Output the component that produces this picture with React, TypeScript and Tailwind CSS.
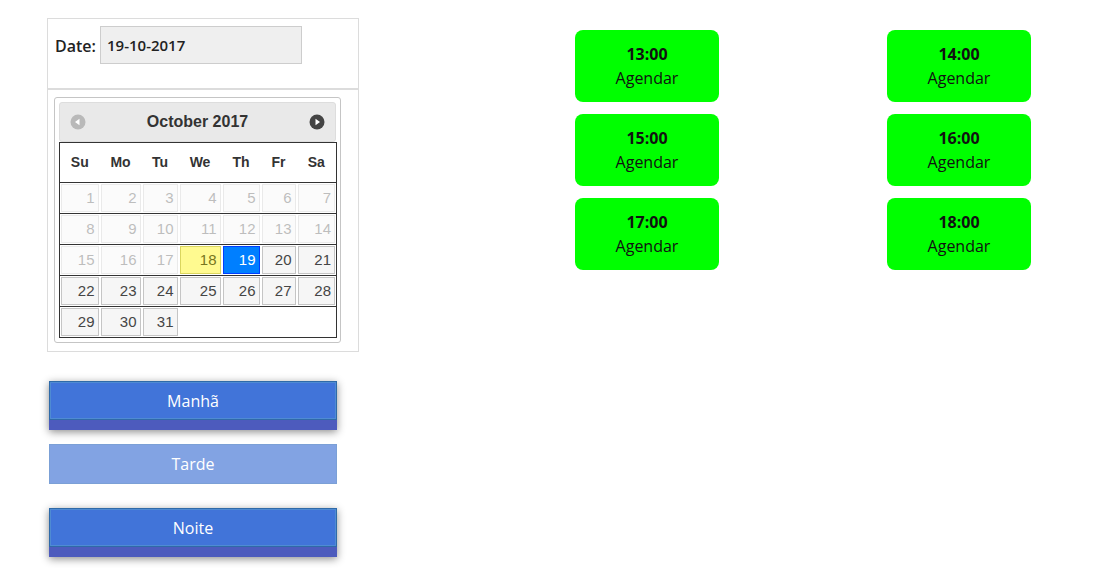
import React from 'react';

type Day = { n: number; state: 'off' | 'on' | 'today' | 'active' };

const colWidths = ['w-[40px]', 'w-[42px]', 'w-[37px]', 'w-[43px]', 'w-[39px]', 'w-[36px]', 'w-[40px]'];

const weeks: (Day | null)[][] = [
  [1, 2, 3, 4, 5, 6, 7].map((n) => ({ n, state: 'off' as const })),
  [8, 9, 10, 11, 12, 13, 14].map((n) => ({ n, state: 'off' as const })),
  [
    { n: 15, state: 'off' },
    { n: 16, state: 'off' },
    { n: 17, state: 'off' },
    { n: 18, state: 'today' },
    { n: 19, state: 'active' },
    { n: 20, state: 'on' },
    { n: 21, state: 'on' },
  ],
  [22, 23, 24, 25, 26, 27, 28].map((n) => ({ n, state: 'on' as const })),
  [{ n: 29, state: 'on' }, { n: 30, state: 'on' }, { n: 31, state: 'on' }, null, null, null, null],
];

const slots = ['13:00', '14:00', '15:00', '16:00', '17:00', '18:00'];

const dayClass = (s: Day['state']) => {
  if (s === 'off') return 'bg-[#f6f6f6] border-[#c5c5c5] text-[#454545] opacity-35';
  if (s === 'today') return 'bg-[#fffa90] border-[#dad55e] text-[#777620]';
  if (s === 'active') return 'bg-[#007fff] border-[#003eff] text-white';
  return 'bg-[#f6f6f6] border-[#c5c5c5] text-[#454545]';
};

const Arrow: React.FC<{ dir: 'prev' | 'next' }> = ({ dir }) => (
  <svg width="16" height="16" viewBox="0 0 16 16">
    <circle cx="8" cy="8" r="7.5" fill={dir === 'prev' ? '#b9b9b9' : '#444'} />
    {dir === 'prev' ? (
      <path d="M5 8 L9.5 4.8 L9.5 11.2 Z" fill="#fff" />
    ) : (
      <path d="M11 8 L6.5 4.8 L6.5 11.2 Z" fill="#fff" />
    )}
  </svg>
);

const ShiftButton: React.FC<{ label: string; flat?: boolean }> = ({ label, flat }) =>
  flat ? (
    <div className="w-[288px] h-[40px] bg-[#82a3e3] border border-[#7ba0d6] flex items-center justify-center text-white text-[16px]">
      {label}
    </div>
  ) : (
    <div className="w-[288px] shadow-[0_2px_8px_rgba(0,0,0,0.45)]">
      <div className="h-[39px] bg-[#4174d9] border border-[#2f6aa8] flex items-center justify-center text-white text-[16px]">
        <div className="w-full h-full border border-[#4f8bd3] flex items-center justify-center">{label}</div>
      </div>
      <div className="h-[10px] bg-[#4d5bbd]" />
    </div>
  );

export default function App() {
  return (
    <div className="w-[1095px] h-[568px] bg-white flex font-['Open_Sans',sans-serif] overflow-hidden">
      {/* left column */}
      <div className="ml-[47px] mt-[18px] w-[312px] flex flex-col">
        <div className="border border-[#dcdcdc]">
          <div className="h-[69px] flex items-start pl-[7px] pt-[7px] gap-[3px]">
            <span className="mt-[8px] w-[42px] text-[16px] font-semibold text-[#222]">Date:</span>
            <div className="w-[202px] h-[38px] bg-[#efefef] border border-[#cdcdcd] flex items-center pl-[6px] text-[15px] font-semibold text-[#222]">
              19-10-2017
            </div>
          </div>
          <div className="h-[2px] bg-[#dcdcdc]" />
          <div className="pl-[6px] pt-[7px] pb-[8px]">
            <div className="w-[287px] border border-[#c5c5c5] rounded-[3px] p-[4px] font-['Liberation_Sans',Arial,sans-serif]">
              <div className="h-[40px] bg-[#e9e9e9] border border-[#dddddd] rounded-[3px] flex items-center justify-between px-[10px]">
                <Arrow dir="prev" />
                <span className="text-[16px] font-bold text-[#333]">October 2017</span>
                <Arrow dir="next" />
              </div>
              <table className="w-[277px] border-collapse border border-[#333] table-fixed">
                <thead>
                  <tr className="border border-[#333] h-[40px]">
                    {['Su', 'Mo', 'Tu', 'We', 'Th', 'Fr', 'Sa'].map((d, i) => (
                      <th key={d} className={`${colWidths[i]} text-[14px] font-bold text-[#333] text-center p-0`}>
                        {d}
                      </th>
                    ))}
                  </tr>
                </thead>
                <tbody>
                  {weeks.map((w, wi) => (
                    <tr key={wi} className="border border-[#333]">
                      {w.map((d, di) => (
                        <td key={di} className="p-[1px] h-[30px]">
                          {d && (
                            <div
                              className={`h-[28px] border flex items-center justify-end pr-[3px] text-[15px] ${dayClass(d.state)}`}
                            >
                              {d.n}
                            </div>
                          )}
                        </td>
                      ))}
                    </tr>
                  ))}
                </tbody>
              </table>
            </div>
          </div>
        </div>

        <div className="ml-[2px] mt-[29px]">
          <ShiftButton label="Manhã" />
        </div>
        <div className="ml-[2px] mt-[14px]">
          <ShiftButton label="Tarde" flat />
        </div>
        <div className="ml-[2px] mt-[24px]">
          <ShiftButton label="Noite" />
        </div>
      </div>

      {/* time slots */}
      <div className="ml-[216px] mt-[30px] grid grid-cols-[144px_144px] gap-x-[168px] gap-y-[12px] content-start">
        {slots.map((s) => (
          <div
            key={s}
            className="h-[72px] bg-[#00ff00] rounded-[8px] flex flex-col items-center justify-center text-[16px] text-[#111] leading-[24px]"
          >
            <span className="font-bold">{s}</span>
            <span>Agendar</span>
          </div>
        ))}
      </div>
    </div>
  );
}
